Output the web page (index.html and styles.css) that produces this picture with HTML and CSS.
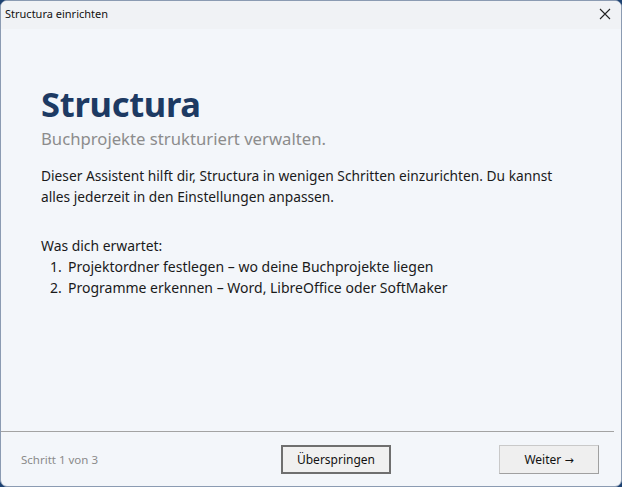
FILE: index.html
```html
<!DOCTYPE html>
<html lang="de">
<head>
<meta charset="utf-8">
<link rel="stylesheet" href="styles.css">
</head>
<body>
<div class="window">
  <div class="titlebar">
    <span class="title">Structura einrichten</span>
    <svg class="close" width="12" height="12" viewBox="0 0 12 12"><path d="M1 1L11 11M11 1L1 11" stroke="#222" stroke-width="1.1" fill="none"/></svg>
  </div>
  <div class="content">
    <h1 class="brand">Structura</h1>
    <p class="tagline">Buchprojekte strukturiert verwalten.</p>
    <p class="intro">Dieser Assistent hilft dir, Structura in wenigen Schritten einzurichten. Du kannst alles jederzeit in den Einstellungen anpassen.</p>
    <p class="expect">Was dich erwartet:</p>
    <ol class="steps">
      <li><span class="num">1.</span>Projektordner festlegen – wo deine Buchprojekte liegen</li>
      <li><span class="num">2.</span>Programme erkennen – Word, LibreOffice oder SoftMaker</li>
    </ol>
  </div>
  <div class="footer">
    <span class="step">Schritt 1 von 3</span>
    <button class="btn btn-skip">Überspringen</button>
    <button class="btn btn-next">Weiter <span class="arrow">→</span></button>
  </div>
</div>
</body>
</html>
```
FILE: styles.css
```css
html, body {
  margin: 0;
  padding: 0;
  width: 622px;
  height: 487px;
  overflow: hidden;
  background: #1d4272;
}
.window {
  box-sizing: border-box;
  width: 622px;
  height: 487px;
  background: #f3f6fa;
  border: 1px solid #8b9bb2;
  border-radius: 7px;
  display: flex;
  flex-direction: column;
  font-family: "Noto Sans", "Open Sans", sans-serif;
  overflow: hidden;
}
.titlebar {
  height: 28px;
  flex: none;
  background: #f0f2f5;
  display: flex;
  align-items: flex-start;
  justify-content: space-between;
  padding: 5px 10px 0 4px;
  box-sizing: border-box;
}
.title {
  font-size: 11px;
  line-height: 16px;
  color: #111;
}
.close {
  display: block;
  margin-top: 2px;
}
.content {
  flex: 1;
  padding: 52px 40px 0 40px;
}
.brand {
  margin: 0;
  font-size: 34.5px;
  font-weight: 700;
  color: #1d3a63;
  line-height: 46px;
  letter-spacing: -0.3px;
}
.tagline {
  margin: 0 0 15px 0;
  font-size: 16.7px;
  color: #8c8c8c;
  line-height: 23px;
}
.intro {
  margin: 0 0 27px 0;
  font-size: 13.75px;
  line-height: 21px;
  color: #1a1a1a;
  width: 540px;
}
.expect {
  margin: 0;
  font-size: 13.9px;
  line-height: 23px;
  color: #1a1a1a;
}
.steps {
  margin: 0;
  padding: 0 0 0 9px;
  list-style: none;
  font-size: 14px;
  line-height: 20.5px;
  color: #1a1a1a;
}
.num {
  display: inline-block;
  width: 18px;
}
.footer {
  flex: none;
  height: 54px;
  border-top: 1px solid #a3a3a3;
  margin-right: 7px;
  display: flex;
  align-items: center;
  padding: 0 14px 0 20px;
}
.step {
  font-size: 11.5px;
  color: #8a8a8a;
  width: 260px;
}
.btn {
  font-family: "Noto Sans", "Open Sans", sans-serif;
  font-size: 12px;
  color: #111;
  height: 29px;
  box-sizing: border-box;
  background: #efefef;
  border: 1px solid #d0d0d0;
  padding: 0;
}
.arrow {
  font-family: "DejaVu Sans", sans-serif;
  font-size: 11px;
}
.btn-skip {
  width: 110px;
  border: 2px solid #6f6f6f;
  background: #f0f0f0;
}
.btn-next {
  width: 100px;
  margin-left: auto;
  margin-right: 1px;
  border: 1px solid #c9c9c9;
  border-right-color: #a0a0a0;
  border-bottom-color: #a0a0a0;
}
```
